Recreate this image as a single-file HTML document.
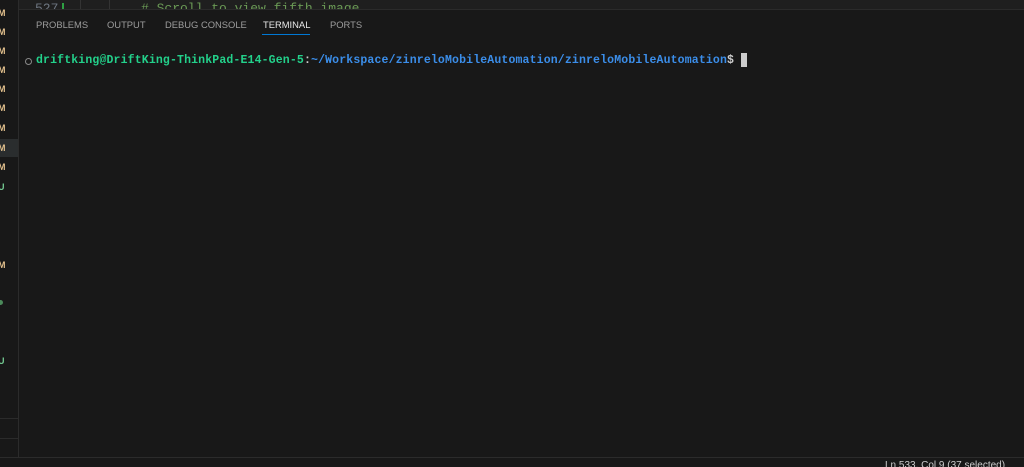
<!DOCTYPE html>
<html><head><style>
html,body{margin:0;padding:0;width:1024px;height:467px;background:#181818;overflow:hidden;position:relative;font-family:"Liberation Sans",sans-serif}
.side{position:absolute;left:0;top:0;width:18px;height:457px;background:#181818;border-right:1px solid #2b2b2b}
.l{position:absolute;left:-2px;font:bold 9px "Liberation Sans",sans-serif;color:#e2c08d}
.u{color:#73c991}
.top{position:absolute;left:19px;top:0;width:1005px;height:9px;background:#1f1f1f;overflow:hidden}
.panel{position:absolute;left:19px;top:9px;width:1005px;height:448px;background:#181818;border-top:1px solid #2b2b2b}
.tab{position:absolute;top:9px;font-size:9.4px;color:#9d9d9d;white-space:nowrap}
.term{position:absolute;left:36px;top:54px;font:bold 11.5px "Liberation Mono","DejaVu Sans Mono",monospace;white-space:pre;letter-spacing:0.15px}
.status{position:absolute;left:0;top:457px;width:1024px;height:10px;background:#181818;border-top:1px solid #2b2b2b}
</style></head><body>
<div class="top">
<div style="position:absolute;left:16px;top:1px;font:13px 'Liberation Mono',monospace;color:#6e7681">527</div>
<div style="position:absolute;left:43px;top:3px;width:2px;height:6px;background:#2ea043"></div>
<div style="position:absolute;left:61px;top:0;width:1px;height:9px;background:#333"></div>
<div style="position:absolute;left:90px;top:0;width:1px;height:9px;background:#333"></div>
<div style="position:absolute;left:122px;top:1px;font:13px 'Liberation Mono',monospace;color:#6a9955;white-space:pre"># Scroll to view fifth image</div>
</div>
<div class="side">
<div style="position:absolute;left:0;top:139px;width:18px;height:18px;background:#2a2d2e"></div>
<div class="l" style="top:8px">M</div>
<div class="l" style="top:27px">M</div>
<div class="l" style="top:46px">M</div>
<div class="l" style="top:65px">M</div>
<div class="l" style="top:84px">M</div>
<div class="l" style="top:103px">M</div>
<div class="l" style="top:123px">M</div>
<div class="l" style="top:143px">M</div>
<div class="l" style="top:162px">M</div>
<div class="l u" style="top:182px">U</div>
<div class="l" style="top:260px">M</div>
<div style="position:absolute;left:-2px;top:300px;width:5px;height:5px;border-radius:50%;background:#4b8a5a"></div>
<div class="l u" style="top:356px">U</div>
<div style="position:absolute;left:0;top:418px;width:18px;height:1px;background:#2b2b2b"></div>
<div style="position:absolute;left:0;top:438px;width:18px;height:1px;background:#2b2b2b"></div>
</div>
<div class="panel">
<div class="tab" style="left:17px">PROBLEMS</div>
<div class="tab" style="left:88px">OUTPUT</div>
<div class="tab" style="left:146px">DEBUG CONSOLE</div>
<div class="tab" style="left:244px;color:#e7e7e7">TERMINAL</div>
<div style="position:absolute;left:243px;top:24px;width:48px;height:1px;background:#0078d4"></div>
<div class="tab" style="left:311px">PORTS</div>
<div style="position:absolute;left:6px;top:48px;width:5px;height:5px;border:1px solid #888;border-radius:50%"></div>
</div>
<div class="term"><span style="color:#23d18b">driftking@DriftKing-ThinkPad-E14-Gen-5</span><span style="color:#ccc">:</span><span style="color:#3b8eea">~/Workspace/zinreloMobileAutomation/zinreloMobileAutomation</span><span style="color:#ccc">$</span></div>
<div style="position:absolute;left:741px;top:53px;width:6px;height:14px;background:#cccccc"></div>
<div class="status"><div style="position:absolute;left:885px;top:2px;font-size:10px;color:#ccc;white-space:nowrap">Ln 533, Col 9 (37 selected)</div></div>
</body></html>
